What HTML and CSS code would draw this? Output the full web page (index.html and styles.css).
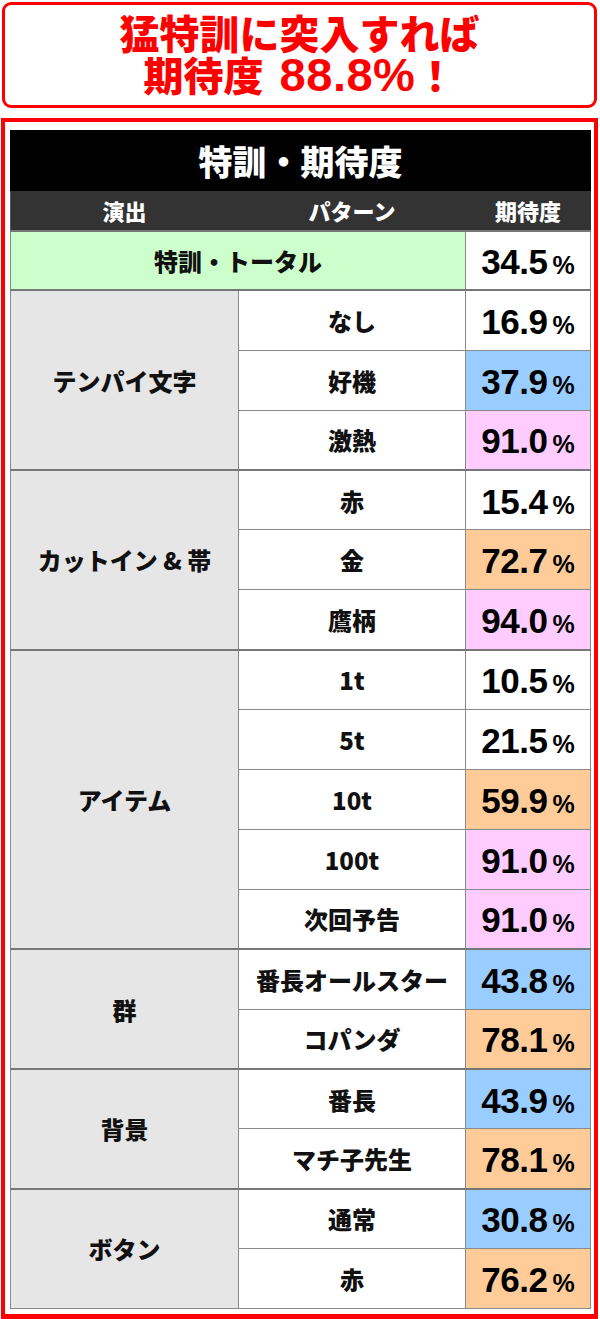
FILE: index.html
```html
<!DOCTYPE html>
<html lang="ja">
<head>
<meta charset="utf-8">
<link rel="stylesheet" href="styles.css">
</head>
<body>
<div class="headline">
  <p class="headline-line">猛特訓に突入すれば</p>
  <p class="headline-line">期待度<span class="big">88.8%</span>！</p>
</div>
<div class="panel">
  <table class="rates">
    <colgroup>
      <col class="c1"><col class="c2"><col class="c3">
    </colgroup>
    <thead>
      <tr><th colspan="3" class="title">特訓・期待度</th></tr>
      <tr class="head"><th>演出</th><th>パターン</th><th>期待度</th></tr>
    </thead>
    <tbody>
      <tr class="grp"><td colspan="2" class="total">特訓・トータル</td><td class="val">34.5<span class="pc">%</span></td></tr>

      <tr class="grp"><td rowspan="3" class="cat">テンパイ文字</td><td class="pat">なし</td><td class="val">16.9<span class="pc">%</span></td></tr>
      <tr><td class="pat">好機</td><td class="val blue">37.9<span class="pc">%</span></td></tr>
      <tr><td class="pat">激熱</td><td class="val pink">91.0<span class="pc">%</span></td></tr>

      <tr class="grp"><td rowspan="3" class="cat">カットイン &amp; 帯</td><td class="pat">赤</td><td class="val">15.4<span class="pc">%</span></td></tr>
      <tr><td class="pat">金</td><td class="val orange">72.7<span class="pc">%</span></td></tr>
      <tr><td class="pat">鷹柄</td><td class="val pink">94.0<span class="pc">%</span></td></tr>

      <tr class="grp"><td rowspan="5" class="cat">アイテム</td><td class="pat">1t</td><td class="val">10.5<span class="pc">%</span></td></tr>
      <tr><td class="pat">5t</td><td class="val">21.5<span class="pc">%</span></td></tr>
      <tr><td class="pat">10t</td><td class="val orange">59.9<span class="pc">%</span></td></tr>
      <tr><td class="pat">100t</td><td class="val pink">91.0<span class="pc">%</span></td></tr>
      <tr><td class="pat">次回予告</td><td class="val pink">91.0<span class="pc">%</span></td></tr>

      <tr class="grp"><td rowspan="2" class="cat">群</td><td class="pat">番長オールスター</td><td class="val blue">43.8<span class="pc">%</span></td></tr>
      <tr><td class="pat">コパンダ</td><td class="val orange">78.1<span class="pc">%</span></td></tr>

      <tr class="grp"><td rowspan="2" class="cat">背景</td><td class="pat">番長</td><td class="val blue">43.9<span class="pc">%</span></td></tr>
      <tr><td class="pat">マチ子先生</td><td class="val orange">78.1<span class="pc">%</span></td></tr>

      <tr class="grp"><td rowspan="2" class="cat">ボタン</td><td class="pat">通常</td><td class="val blue">30.8<span class="pc">%</span></td></tr>
      <tr><td class="pat">赤</td><td class="val orange">76.2<span class="pc">%</span></td></tr>
    </tbody>
  </table>
</div>
</body>
</html>
```

FILE: styles.css
```css
html, body {
  margin: 0;
  padding: 0;
  background: #fff;
}
body {
  font-family: "Noto Sans CJK JP", "Liberation Sans", sans-serif;
  width: 600px;
}
.headline {
  box-sizing: border-box;
  margin: 2px 3px 0 2px;
  height: 106px;
  border: 3px solid #f00;
  border-radius: 9px;
  padding-bottom: 3px;
  display: flex;
  flex-direction: column;
  justify-content: center;
  align-items: center;
}
.headline-line {
  margin: 0;
  color: #f00;
  font-family: "Noto Sans CJK JP", sans-serif;
  font-weight: 900;
  font-size: 40px;
  line-height: 42px;
  letter-spacing: 0;
  white-space: nowrap;
}
.big {
  font-family: "Liberation Sans", sans-serif;
  font-weight: 700;
  font-size: 47px;
  margin-left: 16px;
  letter-spacing: 0.5px;
}
.panel {
  margin: 10px 2px 0 1px;
  border: 4px solid #f00;
  border-bottom-width: 5px;
  padding: 8px 4px 5px 5px;
}
.rates {
  width: 580px;
  border-collapse: collapse;
  table-layout: fixed;
}
.c1 { width: 228px; }
.c2 { width: 227px; }
.c3 { width: 125px; }
.rates th, .rates td {
  box-sizing: border-box;
  padding: 0;
  text-align: center;
  font-weight: 900;
}
.title {
  background: #000;
  color: #fff;
  height: 60px;
  font-size: 34px;
  letter-spacing: 0;
  border: 1px solid #000;
}
.head th {
  background: #333;
  color: #fff;
  height: 40px;
  font-size: 22px;
  border: 1px solid #333;
  border-left: 1px solid #555;
}
.rates td {
  height: 59.9px;
  border: 1px solid #8a8a8a;
  font-size: 24px;
  color: #111;
}
.grp td {
  border-top: 2px solid #777;
}
.total {
  background: #ccffcc;
}
.cat {
  background: #e6e6e6;
}
.pat {
  background: #fff;
}
.rates td.val {
  background: #fff;
  font-family: "Liberation Sans", sans-serif;
  font-size: 35px;
  font-weight: 700;
  letter-spacing: -0.5px;
  color: #000;
  padding-top: 3px;
}
.pc {
  font-size: 25px;
  letter-spacing: 0;
  margin-left: 5px;
  font-weight: 700;
}
.rates td.blue { background: #99ccff; }
.rates td.pink { background: #ffccff; }
.rates td.orange { background: #ffcc99; }
```
